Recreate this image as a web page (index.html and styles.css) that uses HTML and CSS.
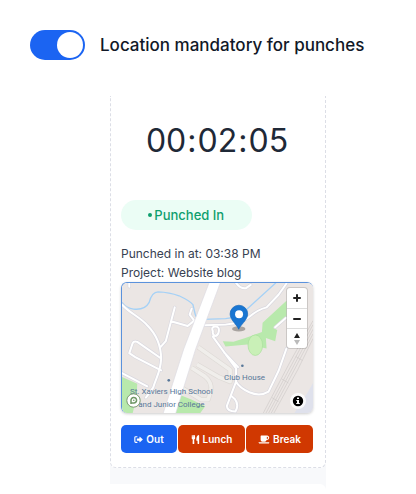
FILE: index.html
```html
<!DOCTYPE html>
<html lang="en">
<head>
<meta charset="utf-8">
<meta name="viewport" content="width=device-width, initial-scale=1">
<title>Punch clock</title>
<link rel="stylesheet" href="styles.css">
</head>
<body>
<main>
  <div class="setting">
    <input class="switch" type="checkbox" role="switch" id="location" checked>
    <label class="setting-label" for="location">Location mandatory for punches</label>
  </div>

  <div class="panel">
    <section class="card">
      <div class="timer" role="timer"><span>00</span><span>:</span><span>02</span><span>:</span><span>05</span></div>
      <div class="status"><span class="dot"></span>Punched In</div>
      <p class="detail">Punched in at: 03:38 PM</p>
      <p class="detail">Project: Website blog</p>

      <div class="map">
        <svg class="map-art" viewBox="364 844 576 393" preserveAspectRatio="xMidYMid slice" aria-hidden="true">
          <path fill="#ebe6e4" d="M364 844h576v393H364z"/>
          <!-- parks and water -->
          <path fill="#b8e9ac" d="M364 1128l46 20-2 40-12 50h-32zM543 1184l30 12 42 20-16 22h-78z"/>
          <path fill="#b8e9ac" d="M860 898L788 964 786 992 736 1010 700 1022 668 1020 676 1036 742 1030 800 1042 798 1010 826 1020 832 986 820 980 860 946z"/>
          <ellipse cx="766" cy="1032" rx="22" ry="31" fill="#c9f0b7" stroke="#a9df9b" stroke-width="2"/>
          <path fill="#dfe1ec" d="M940 1146l-18 32-16 22-22 37h56z"/>
          <!-- railway -->
          <g fill="none" stroke="#cfcac8" stroke-width="2">
            <path d="M940 958L870 1084 790 1237M940 970L876 1090 798 1237M940 984L882 1094 806 1237M940 998L888 1098 814 1237M940 1012L894 1106 822 1237"/>
            <path d="M888 1066l20 12M846 1134l20 12M816 1190l20 12"/>
          </g>
          <!-- service lanes -->
          <g fill="none" stroke="#dedad6" stroke-width="15" stroke-linejoin="round">
            <path d="M594 1038l96 68v36l-34-14-66-38M574 1100l40 26q22 18 18 42l-8 28h-22l-62-38"/>
          </g>
          <g fill="none" stroke="#f0eeeb" stroke-width="11" stroke-linejoin="round">
            <path d="M594 1038l96 68v36l-34-14-66-38M574 1100l40 26q22 18 18 42l-8 28h-22l-62-38"/>
          </g>
          <!-- stream -->
          <path fill="none" stroke="#a5d1f6" stroke-width="4" d="M364 903q14 18 35 20 34 4 47-20 8-32 27-32 34 1 63 12 34 16 42 27l7 30q2 12 25 14l66-2q32-2 62-26l90-82"/>
          <!-- streets, casing then surface -->
          <path fill="none" stroke="#d9d8df" stroke-width="10" stroke-linejoin="round" stroke-linecap="round" d="M364 910c22 24 58 40 76 62 26 26 42 62 42 102-2 38-14 54-24 86l-22 30M523 918l-11 42-16 60-16 18M512 960l50 14 20-16-14-18 6-18M582 958l26 14 68-2q50-4 70-22 28-24 54-30l36-38 24-34M482 1108l-78-40-18-12 10-30q4-8 14-4l72 50M364 1116l76 40M638 990q-6-14 8-14 12 0 10 14-2 14-12 14-8-4-6-14M638 1006l42 58 28 38v40q10 18 40 32 32 14 58-2l30-62 24-68M672 1054l42 44M708 1142l-16 42-12 32q2 16 26 16 12-20-2-38l-12-10M826 978l32-28M708 844q12 18 30 16l14-10M386 846v10"/>
          <path fill="none" stroke="#fff" stroke-width="6" stroke-linejoin="round" stroke-linecap="round" d="M364 910c22 24 58 40 76 62 26 26 42 62 42 102-2 38-14 54-24 86l-22 30M523 918l-11 42-16 60-16 18M512 960l50 14 20-16-14-18 6-18M582 958l26 14 68-2q50-4 70-22 28-24 54-30l36-38 24-34M482 1108l-78-40-18-12 10-30q4-8 14-4l72 50M364 1116l76 40M638 990q-6-14 8-14 12 0 10 14-2 14-12 14-8-4-6-14M638 1006l42 58 28 38v40q10 18 40 32 32 14 58-2l30-62 24-68M672 1054l42 44M708 1142l-16 42-12 32q2 16 26 16 12-20-2-38l-12-10M826 978l32-28M708 844q12 18 30 16l14-10M386 846v10"/>
          <!-- main road -->
          <path fill="#fff" stroke="#dcdbe2" stroke-width="2" d="M628 840h34l-76 204-62 200h-38l64-200z"/>
          <circle cx="505" cy="1138" r="4" fill="#587799"/>
          <circle cx="727" cy="1094" r="4" fill="#587799"/>
          <!-- pin -->
          <ellipse cx="716" cy="983" rx="20" ry="8" fill="#665f5c" opacity=".5"/>
          <path fill="#1976d2" stroke="#1265b8" stroke-width="2" d="M716 984c-4-12-26-28-26-46a26 26 0 0 1 53 0c0 18-23 34-27 46z"/>
          <circle cx="717" cy="939" r="12" fill="#fff"/>
        </svg>
        <span class="place club">Club House</span>
        <span class="place school">St. Xaviers High School<br>and Junior College</span>
        <div class="controls">
          <button type="button" aria-label="Zoom in"><svg viewBox="0 0 20 20"><path d="M10 7v6M7 10h6" stroke="#222" stroke-width="2" stroke-linecap="round"/></svg></button>
          <button type="button" aria-label="Zoom out"><svg viewBox="0 0 20 20"><path d="M7 10h6" stroke="#222" stroke-width="2" stroke-linecap="round"/></svg></button>
          <button type="button" aria-label="Reset north"><svg viewBox="0 0 20 20"><path fill="#222" d="M10 4l3 5H7z"/><path fill="#bbb" d="M10 16l3-5H7z"/></svg></button>
        </div>
        <a class="brand" href="#" aria-label="Map provider"><svg viewBox="0 0 15 15"><circle cx="7.500" cy="7.500" r="6.700" fill="#fff" stroke="#799a70" stroke-width="1"/><path fill="none" stroke="#6f9666" stroke-width="1.500" d="M5 11V7.500a2.800 2.800 0 1 1 2.800 2.500H5.500"/><circle cx="7.800" cy="7.300" r=".8" fill="#6f9666"/></svg></a>
        <button class="info" type="button" aria-label="Attribution"><svg viewBox="0 0 16 16"><circle cx="8" cy="8" r="8" fill="#fff" opacity=".8"/><circle cx="8" cy="8" r="5.200" fill="#000"/><path fill="#fff" d="M7 4.400h2v1.600H7zM6.300 6.900H9v3h.8v1H6.200v-1H7V7.900h-.7z"/></svg></button>
      </div>

      <div class="actions">
        <button class="action out" type="button"><svg viewBox="0 0 512 512" class="icon"><path fill="none" stroke="currentColor" stroke-width="64" stroke-linecap="round" stroke-linejoin="round" d="M170 96H96q-48 0-48 48v224q0 48 48 48h74"/><path fill="currentColor" d="M310 112q0-28 24-12l158 138q20 18 0 36L334 412q-24 16-24-12v-80H184q-24 0-24-24v-80q0-24 24-24h126z"/></svg>Out</button>
        <button class="action" type="button"><svg viewBox="0 0 448 512" class="icon"><path fill="currentColor" d="M16 0h36l8 144L80 0h40l10 144L148 0h36l20 150c4 52-16 88-56 108l10 230q0 24-24 24H82q-24 0-24-24l10-230C28 238 4 204 8 150zM432 24v464q0 24-24 24h-44q-24 0-24-24V320h-44q-28 0-28-32C268 120 320 0 404 0q28 0 28 24z"/></svg>Lunch</button>
        <button class="action" type="button"><svg viewBox="0 0 640 512" class="icon wide"><path fill="currentColor" fill-rule="evenodd" d="M152 32h360q96 14 108 128-12 116-124 128h-32q-12 80-96 96H224q-88-12-96-96V56q0-24 24-24zm328 64v128h20q52-12 56-64-4-52-56-64zM16 416h592q24 0 8 32-18 32-56 32H88q-40 0-66-32-22-32-6-32z"/></svg>Break</button>
      </div>
    </section>
    <div class="next"></div>
  </div>
</main>
</body>
</html>
```

FILE: styles.css
```css
* { box-sizing: border-box; }

body {
  margin: 0;
  background: #fff;
  color: #111827;
  font-family: Inter, "Liberation Sans", sans-serif;
}

button { font: inherit; border: 0; padding: 0; cursor: pointer; }
svg { display: block; }

.setting {
  display: flex;
  align-items: center;
  gap: 15px;
  padding: 30px 30px 36px;
}

.switch {
  appearance: none;
  flex: none;
  display: flex;
  justify-content: flex-end;
  width: 55px;
  height: 30px;
  margin: 0;
  padding: 2px;
  border-radius: 15px;
  background: #1b64f2;
}
.switch::before {
  content: "";
  width: 26px;
  height: 26px;
  border-radius: 50%;
  background: #fff;
}
.switch:not(:checked) { justify-content: flex-start; background: #d1d5db; }

.setting-label {
  font-size: 17px;
  font-weight: 500;
  line-height: 24px;
  white-space: nowrap;
}

.panel {
  margin: 0 90px 0 110px;
  background: #f8f9fb;
}

.card {
  padding: 22px 12px 14px 10px;
  background: #fff;
  border: 1px dashed #dcdee6;
  border-top: 0;
  border-radius: 0 0 6px 6px;
}

.next {
  height: 10px;
  margin-top: 16px;
  background: #fff;
  border-radius: 0 6px 0 0;
}

.timer {
  display: flex;
  justify-content: center;
  gap: 1px;
  margin-bottom: 36px;
  color: #1f2937;
  font-size: 32px;
  line-height: 46px;
}

.status {
  display: flex;
  align-items: center;
  justify-content: center;
  gap: 2px;
  width: 68%;
  height: 30px;
  margin-bottom: 14px;
  border-radius: 15px;
  background: #ebfdf5;
  color: #0e9f6e;
  font-size: 13px;
  font-weight: 500;
}
.dot { width: 4px; height: 4px; border-radius: 50%; background: currentColor; }

.detail {
  margin: 0;
  color: #374151;
  font-size: 12px;
  line-height: 19px;
}

.map {
  position: relative;
  aspect-ratio: 192 / 131;
  overflow: hidden;
  border-top: 1px solid #5b92dc;
  border-left: 1px solid #5b92dc;
  border-radius: 6px;
  box-shadow: 0 1px 3px #0003;
}
.map-art { width: 100%; height: 100%; }

.place {
  position: absolute;
  color: #587799;
  font-family: Roboto, "Liberation Sans", sans-serif;
  font-size: 8px;
  line-height: 13px;
  text-align: center;
  white-space: nowrap;
}
.club { left: 102px; top: 88px; }
.school { left: 8px; top: 102px; }

.controls {
  position: absolute;
  top: 5px;
  right: 6px;
  width: 20px;
  border-radius: 3px;
  background: #fff;
  box-shadow: 0 0 0 1px #0002;
}
.controls button { display: block; width: 20px; height: 20px; background: none; }
.controls button + button { border-top: 1px solid #ddd; }
.controls svg { width: 20px; height: 20px; }

.brand { position: absolute; left: 4px; bottom: 5px; width: 15px; }
.info { position: absolute; right: 7px; bottom: 4px; width: 16px; background: none; }

.actions { display: flex; gap: 1px; margin-top: 12px; }

.action {
  display: flex;
  flex: 67 1 0;
  align-items: center;
  justify-content: center;
  gap: 3px;
  height: 28px;
  border-radius: 5px;
  background: #d03801;
  color: #fff;
  font-size: 10px;
  font-weight: 600;
}
.out { flex-grow: 56; background: #1b64f2; }
.icon { width: 9px; height: 9px; }
.wide { width: 12px; }
```
